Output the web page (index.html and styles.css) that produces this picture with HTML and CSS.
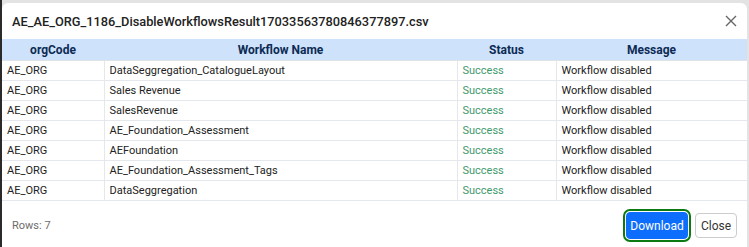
FILE: index.html
```html
<!DOCTYPE html>
<html>
<head>
<meta charset="utf-8">
<link rel="stylesheet" href="styles.css">
</head>
<body>
<div class="modal">
  <div class="modal-header">
    <div class="title">AE_AE_ORG_1186_DisableWorkflowsResult17033563780846377897.csv</div>
    <button class="close-x" aria-label="Close">
      <svg width="12" height="12" viewBox="0 0 12 12"><path d="M1 1L11 11M11 1L1 11" stroke="#666" stroke-width="1.4" fill="none"/></svg>
    </button>
  </div>
  <table class="grid">
    <colgroup>
      <col class="c1"><col class="c2"><col class="c3"><col class="c4">
    </colgroup>
    <thead>
      <tr><th>orgCode</th><th>Workflow Name</th><th>Status</th><th>Message</th></tr>
    </thead>
    <tbody>
      <tr><td>AE_ORG</td><td>DataSeggregation_CatalogueLayout</td><td class="ok">Success</td><td>Workflow disabled</td></tr>
      <tr><td>AE_ORG</td><td>Sales Revenue</td><td class="ok">Success</td><td>Workflow disabled</td></tr>
      <tr><td>AE_ORG</td><td>SalesRevenue</td><td class="ok">Success</td><td>Workflow disabled</td></tr>
      <tr><td>AE_ORG</td><td>AE_Foundation_Assessment</td><td class="ok">Success</td><td>Workflow disabled</td></tr>
      <tr><td>AE_ORG</td><td>AEFoundation</td><td class="ok">Success</td><td>Workflow disabled</td></tr>
      <tr><td>AE_ORG</td><td>AE_Foundation_Assessment_Tags</td><td class="ok">Success</td><td>Workflow disabled</td></tr>
      <tr><td>AE_ORG</td><td>DataSeggregation</td><td class="ok">Success</td><td>Workflow disabled</td></tr>
    </tbody>
  </table>
  <div class="modal-footer">
    <span class="rows">Rows: 7</span>
    <div class="actions">
      <button class="btn btn-primary">Download</button>
      <button class="btn btn-light">Close</button>
    </div>
  </div>
</div>
</body>
</html>
```
FILE: styles.css
```css
html { background: #e3e3e3; }
body {
  margin: 0;
  padding-top: 3px;
  border-left: 2px solid #2a2a2a;
  font-family: Roboto, "Liberation Sans", Arial, sans-serif;
  height: 244px;
  overflow: hidden;
}
.modal {
  width: 745px;
  background: #fff;
  border-radius: 6px 6px 0 0;
  height: 244px;
}
.modal-header {
  height: 36px;
  display: flex;
  align-items: center;
  justify-content: space-between;
  padding: 0 10px;
}
.title {
  font-size: 12.8px;
  font-weight: 500;
  color: #222;
}
.close-x {
  border: 0;
  background: none;
  padding: 0;
  display: flex;
}
.grid {
  width: 100%;
  border-collapse: collapse;
  table-layout: fixed;
  font-size: 11px;
}
.c1 { width: 102px; }
.c2 { width: 353px; }
.c3 { width: 99px; }
.grid th {
  background: #cfe2fb;
  color: #0c2b54;
  font-weight: 700;
  font-size: 12px;
  height: 21px;
  padding: 0;
  text-align: center;
  border-bottom: 1px solid #dfe3e8;
}
.grid td {
  height: 19px;
  padding: 0 5px;
  color: #222;
  border: 1px solid #e4e7eb;
  border-top: 0;
  white-space: nowrap;
}
.grid td:first-child { border-left: 0; }
.grid td:last-child { border-right: 0; }
.grid td.ok { color: #3f9a6c; }
.modal-footer {
  display: flex;
  align-items: center;
  justify-content: space-between;
  padding: 11px 10px 0 10px;
}
.rows {
  font-size: 11px;
  color: #6c6c6c;
}
.actions {
  display: flex;
  gap: 7px;
  align-items: center;
}
.btn {
  font-family: Roboto, "Liberation Sans", Arial, sans-serif;
  font-size: 12px;
  border-radius: 4px;
  cursor: pointer;
}
.btn-primary {
  background: #0d6efd;
  color: #fff;
  border: 1px solid #0d6efd;
  height: 27px;
  width: 62px;
  padding: 0;
  outline: 2px solid #0b7a12;
  outline-offset: 1px;
}
.btn-light {
  background: #fff;
  color: #333;
  border: 1px solid #ccc;
  height: 25px;
  width: 42px;
  padding: 0;
}
```
